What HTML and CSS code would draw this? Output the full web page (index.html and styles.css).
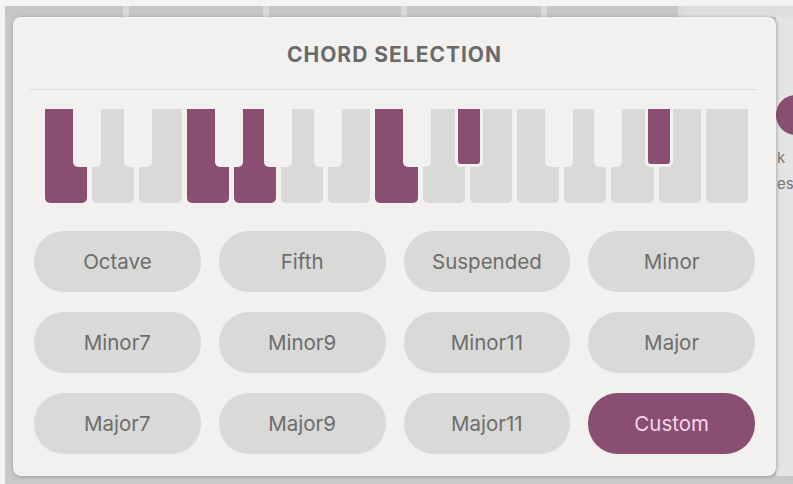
FILE: index.html
```html
<!DOCTYPE html>
<html lang="en">

<head>
  <meta charset="UTF-8">
  <meta name="viewport" content="width=device-width, initial-scale=1.0">
  <title>Chord Selection</title>
  <link rel="stylesheet" href="styles.css">
</head>

<body>
  <div class="screen">
    <!-- app behind the dialog -->
    <div class="backdrop">
      <div class="tabs">
        <span class="tab tab-1"></span>
        <span class="tab tab-2"></span>
        <span class="tab tab-3"></span>
        <span class="tab tab-4"></span>
        <span class="tab tab-5"></span>
        <span class="tab tab-rest"></span>
      </div>
      <div class="workspace">
        <div class="side-peek">
          <span class="peek-dot"></span>
          <p class="peek-text">k<br>es</p>
        </div>
      </div>
    </div>

    <!-- dialog -->
    <div class="chord-dialog">
      <h1 class="dialog-title">CHORD SELECTION</h1>
      <hr class="divider">

      <div class="keyboard">
        <div class="white-key active"></div>
        <div class="white-key"></div>
        <div class="white-key"></div>
        <div class="white-key active"></div>
        <div class="white-key active"></div>
        <div class="white-key"></div>
        <div class="white-key"></div>
        <div class="white-key active"></div>
        <div class="white-key"></div>
        <div class="white-key"></div>
        <div class="white-key"></div>
        <div class="white-key"></div>
        <div class="white-key"></div>
        <div class="white-key"></div>
        <div class="white-key"></div>

        <div class="black-key" style="left: 28px"><span></span></div>
        <div class="black-key" style="left: 79px"><span></span></div>
        <div class="black-key" style="left: 170px"><span></span></div>
        <div class="black-key" style="left: 219px"><span></span></div>
        <div class="black-key" style="left: 269px"><span></span></div>
        <div class="black-key" style="left: 358px"><span></span></div>
        <div class="black-key active" style="left: 410px"><span></span></div>
        <div class="black-key" style="left: 500px"><span></span></div>
        <div class="black-key" style="left: 549px"><span></span></div>
        <div class="black-key active" style="left: 600px"><span></span></div>
      </div>

      <div class="chord-grid">
        <button class="chord-btn">Octave</button>
        <button class="chord-btn">Fifth</button>
        <button class="chord-btn">Suspended</button>
        <button class="chord-btn">Minor</button>
        <button class="chord-btn">Minor7</button>
        <button class="chord-btn">Minor9</button>
        <button class="chord-btn">Minor11</button>
        <button class="chord-btn">Major</button>
        <button class="chord-btn">Major7</button>
        <button class="chord-btn">Major9</button>
        <button class="chord-btn">Major11</button>
        <button class="chord-btn selected">Custom</button>
      </div>
    </div>
  </div>
</body>

</html>
```

FILE: styles.css
```css
body {
  font-family: Inter, 'Noto Sans', sans-serif;
  margin: 0;
  background-color: #f3f3f3;
  color: #6b6b6b;
}

.screen {
  position: relative;
  width: 793px;
  height: 484px;
  padding: 6px 0 0 5px;
  box-sizing: border-box;
  overflow: hidden;
}

.backdrop {
  height: 100%;
  background-color: #c9c9c9;
  display: flex;
  flex-direction: column;
}

.tabs {
  display: flex;
  height: 11px;
  gap: 6px;
  background-color: #d9d9d9;
}

.tab {
  background-color: #c6c6c6;
}

.tab-1 { width: 118px; }
.tab-2 { width: 134px; }
.tab-3 { width: 132px; }
.tab-4 { width: 134px; }
.tab-5 { width: 131px; }

.tab-rest {
  flex: 1;
  background-color: #dedede;
}

.workspace {
  flex: 1;
  display: flex;
  justify-content: flex-end;
}

.side-peek {
  position: relative;
  width: 17px;
  margin-bottom: 8px;
  background-color: #e4e4e4;
  overflow: hidden;
}

.peek-dot {
  position: absolute;
  left: 0;
  top: 78px;
  width: 40px;
  height: 40px;
  border-radius: 50%;
  background-color: #8a4e73;
}

.peek-text {
  margin: 0;
  padding: 128px 0 0 1px;
  font-size: 15px;
  line-height: 26px;
  color: #777;
  white-space: nowrap;
}

.chord-dialog {
  position: absolute;
  left: 13px;
  top: 17px;
  width: 763px;
  height: 459px;
  box-sizing: border-box;
  padding: 0 21px 20px;
  background-color: #f2f1f0;
  border-radius: 8px;
  box-shadow: 0 1px 4px rgba(0, 0, 0, 0.2), 2px 0 3px rgba(0, 0, 0, 0.08);
}

.dialog-title {
  margin: 0;
  padding-top: 24px;
  font-size: 21px;
  line-height: 28px;
  font-weight: 700;
  letter-spacing: 1px;
  text-align: center;
  color: #6a6a6a;
}

.divider {
  margin: 20px -2px 0 -4px;
  border: none;
  border-top: 1px solid #dddcdb;
}

.keyboard {
  position: relative;
  display: grid;
  grid-template-columns: repeat(15, 1fr);
  gap: 5px;
  height: 94px;
  margin: 19px 7px 0 11px;
}

.white-key {
  background-color: #d9d9d8;
  border-radius: 0 0 5px 5px;
}

.white-key.active {
  background-color: #8a4e73;
}

.black-key {
  position: absolute;
  top: 0;
  width: 28px;
  height: 58px;
  box-sizing: border-box;
  padding: 0 3px 3px;
  background-color: #f2f1f0;
  border-radius: 0 0 5px 5px;
}

.black-key span {
  display: block;
  height: 100%;
  border-radius: 0 0 3px 3px;
}

.black-key.active span {
  background-color: #8a4e73;
}

.chord-grid {
  display: grid;
  grid-template-columns: repeat(4, 1fr);
  grid-auto-rows: 61px;
  column-gap: 18px;
  row-gap: 20px;
  margin-top: 28px;
}

.chord-btn {
  font-family: inherit;
  font-size: 20.5px;
  color: #6d6d6d;
  background-color: #d9d9d8;
  border: none;
  border-radius: 30px;
  cursor: pointer;
}

.chord-btn.selected {
  background-color: #8a4e73;
  color: #f3d6e6;
}
```
